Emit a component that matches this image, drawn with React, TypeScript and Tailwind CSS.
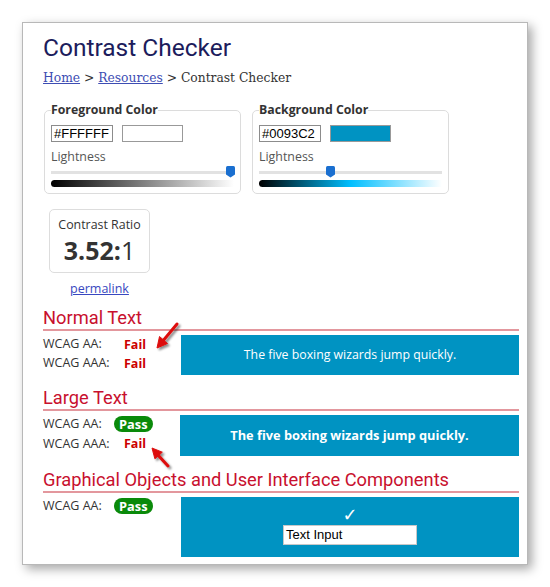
import React from "react";

function Thumb({ left }: { left: number }) {
  return (
    <svg className="absolute top-0" style={{ left }} width="9" height="12" viewBox="0 0 9 12">
      <path d="M0 1.5 Q0 0 1.5 0 H7.5 Q9 0 9 1.5 V8.5 L4.5 11.5 L0 8.5 Z" fill="#1a6fd0" />
    </svg>
  );
}

function ColorBox({
  label,
  hex,
  swatch,
  thumb,
  gradient,
}: {
  label: string;
  hex: string;
  swatch: string;
  thumb: number;
  gradient: string;
}) {
  return (
    <fieldset className="w-[197px] rounded-[5px] border border-[#dcdcdc] px-[6px] pb-[6px] pt-[6px]">
      <legend className="text-[12.3px] font-bold leading-[18px] text-[#333]">{label}</legend>
      <div className="flex gap-[9px]">
        <div className="h-[17px] w-[62px] border border-[#8c8c8c] px-[2px] font-['Liberation_Sans',Arial,sans-serif] text-[13px] leading-[15px] text-black">
          {hex}
        </div>
        <div className="h-[17px] w-[61px] border border-[#999]" style={{ background: swatch }} />
      </div>
      <div className="mt-[6px] text-[12.4px] leading-[18px] text-[#555]">Lightness</div>
      <div className="relative h-[12px] w-full">
        <div className="absolute left-0 right-0 top-[5px] h-[3px] bg-[#e2e2e2]" />
        <Thumb left={thumb} />
      </div>
      <div className="mt-[2px] h-[7px] w-full rounded-l-full" style={{ background: gradient }} />
    </fieldset>
  );
}

function Result({ pass }: { pass: boolean }) {
  return pass ? (
    <span className="h-[16px] rounded-full bg-[#0a8a0a] px-[5px] text-[12.8px] font-bold leading-[16px] text-white">
      Pass
    </span>
  ) : (
    <span className="pl-[10px] text-[12.5px] font-bold leading-[16px] text-[#cc0000]">Fail</span>
  );
}

function Row({ label, pass, h }: { label: string; pass: boolean; h: string }) {
  return (
    <div className={`flex items-center ${h}`}>
      <span className="w-[71px] text-[12.5px] text-[#333]">{label}</span>
      <Result pass={pass} />
    </div>
  );
}

function Heading({ children, mt }: { children: React.ReactNode; mt: string }) {
  return (
    <h2
      className={`${mt} border-b-2 border-[#e3979d] font-['Roboto',sans-serif] text-[18.3px] leading-[22px] text-[#c8102e]`}
    >
      {children}
    </h2>
  );
}

export default function App() {
  return (
    <div className="min-h-[587px] w-[550px] bg-white pl-[22px] pt-[22px] font-['Open_Sans',sans-serif]">
      <div className="relative h-[543px] w-[506px] border border-[#b8b8b8] bg-white pl-[20px] pr-[8px] pt-[10px] shadow-[4px_4px_10px_rgba(0,0,0,0.35)]">
        <h1 className="font-['Roboto',sans-serif] text-[24.5px] leading-[30px] text-[#1c1c5c]">Contrast Checker</h1>
        <div className="mt-[6px] font-['DejaVu_Serif',serif] text-[12.3px] leading-[18px] text-[#333]">
          <a href="#" className="text-[#3d4db3] underline">
            Home
          </a>{" "}
          &gt;{" "}
          <a href="#" className="text-[#3d4db3] underline">
            Resources
          </a>{" "}
          &gt; Contrast Checker
        </div>

        <div className="ml-[1px] mt-[14px] flex gap-[11px]">
          <ColorBox
            label="Foreground Color"
            hex="#FFFFFF"
            swatch="#FFFFFF"
            thumb={175}
            gradient="linear-gradient(to right, #000000, #ffffff)"
          />
          <ColorBox
            label="Background Color"
            hex="#0093C2"
            swatch="#0093C2"
            thumb={67}
            gradient="linear-gradient(to right, #000000, #00bfff 50%, #ffffff)"
          />
        </div>

        <div className="ml-[6px] mt-[15px] w-[101px]">
          <div className="h-[64px] rounded-[5px] border border-[#dddddd] pt-[6px] text-center text-[#333]">
            <div className="text-[12.4px] leading-[18px]">Contrast Ratio</div>
            <div className="mt-[1px] text-[25px] leading-[30px]">
              <b>3.52:</b>1
            </div>
          </div>
          <div className="mt-[7px] text-center text-[12.5px] leading-[18px]">
            <a href="#" className="text-[#3848c0] underline">
              permalink
            </a>
          </div>
        </div>

        <Heading mt="mt-[9px]">Normal Text</Heading>
        <div className="mt-[4px] flex">
          <div className="w-[138px]">
            <Row label="WCAG AA:" pass={false} h="h-[19px]" />
            <Row label="WCAG AAA:" pass={false} h="h-[19px]" />
          </div>
          <div className="flex h-[40px] flex-1 items-center justify-center bg-[#0093C2] text-[12.3px] text-white">
            The five boxing wizards jump quickly.
          </div>
        </div>

        <Heading mt="mt-[12px]">Large Text</Heading>
        <div className="mt-[4px] flex">
          <div className="-mt-[1px] w-[137px]">
            <Row label="WCAG AA:" pass={true} h="h-[20px]" />
            <Row label="WCAG AAA:" pass={false} h="h-[20px]" />
          </div>
          <div className="flex h-[41px] flex-1 items-center justify-center bg-[#0093C2] text-[12.8px] font-bold text-white">
            The five boxing wizards jump quickly.
          </div>
        </div>

        <Heading mt="mt-[13px]">Graphical Objects and User Interface Components</Heading>
        <div className="mt-[4px] flex">
          <div className="-mt-[1px] w-[138px]">
            <Row label="WCAG AA:" pass={true} h="h-[20px]" />
          </div>
          <div className="flex h-[60px] flex-1 flex-col items-center bg-[#0093C2] pt-[8px]">
            <div className="font-['DejaVu_Sans',sans-serif] text-[18px] font-bold leading-[20px] text-white">✓</div>
            <div className="h-[20px] w-[134px] border border-[#c8c8c8] bg-white pl-[2px] font-['Liberation_Sans',Arial,sans-serif] text-[13px] leading-[18px] text-black">
              Text Input
            </div>
          </div>
        </div>

        <svg
          className="pointer-events-none absolute left-[-1px] top-[-1px]"
          width="506"
          height="543"
          viewBox="22 22 506 543"
        >
          <defs>
            <filter id="sh" x="-50%" y="-50%" width="200%" height="200%">
              <feDropShadow dx="2" dy="2" stdDeviation="1.3" floodColor="#000" floodOpacity="0.45" />
            </filter>
          </defs>
          <g filter="url(#sh)" fill="#dd1111" stroke="#dd1111" strokeLinejoin="round">
            <line x1="177" y1="324" x2="162" y2="342" strokeWidth="3" strokeLinecap="round" />
            <polygon points="157,348 167.5,343.5 159.5,336.5" strokeWidth="1" />
            <line x1="168" y1="466" x2="157" y2="454" strokeWidth="3" strokeLinecap="round" />
            <polygon points="152,448 162.3,452.2 154.9,458.8" strokeWidth="1" />
          </g>
        </svg>
      </div>
    </div>
  );
}
